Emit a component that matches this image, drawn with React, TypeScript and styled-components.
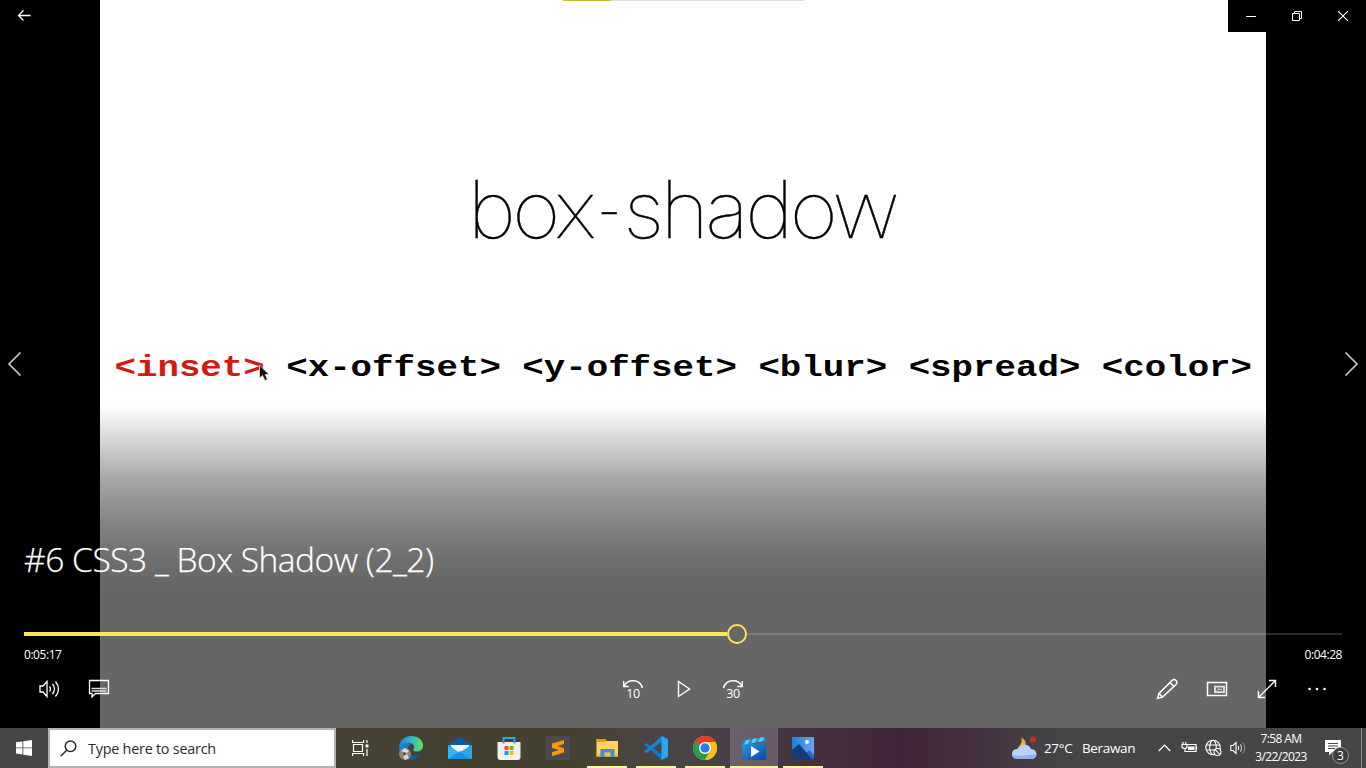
import React from 'react';
import styled, { createGlobalStyle } from 'styled-components';

const Global = createGlobalStyle`
  * { box-sizing: border-box; }
  html, body { margin: 0; background: #000; }
  body { width: 1366px; height: 768px; overflow: hidden; font-family: "Open Sans", "Noto Sans", sans-serif; color: #fff; }
  svg { display: block; flex: none; }
`;

const Screen = styled.div`
  width: 1366px;
  height: 768px;
  display: grid;
  grid-template-rows: 728px 40px;
`;

const Player = styled.main`
  display: grid;
  grid-template: 728px / 1366px;
  overflow: hidden;
  background: #000;
  & > * { grid-area: 1 / 1; }
`;

const Slide = styled.section`
  justify-self: center;
  width: 1166px;
  background: #fff;
  color: #000;
  display: flex;
  flex-direction: column;
  align-items: center;
  padding-top: 162px;
`;

const SlideTitle = styled.h1`
  margin: 0 2px 0 0;
  height: 94px;
  font: 100 79px/94px Inter, sans-serif;
  letter-spacing: -3.5px;
  white-space: nowrap;
  transform: scaleX(1.05);
  -webkit-text-stroke: 0.4px #000;
`;
const Hyphen = styled.span`
  display: inline-block;
  transform: scaleX(0.66);
  margin: 0 -1px 0 -1px;
`;

const Syntax = styled.div`
  margin: 92px 0 0 3px;
  width: 1140px;
  font: bold 35.77px/40px "Liberation Mono", monospace;
  white-space: nowrap;
  transform: scaleY(0.84);
`;

const Inset = styled.span`
  color: #d01c10;
`;

const Scrim = styled.div`
  background: linear-gradient(
    to bottom,
    transparent 406px,
    rgba(0, 0, 0, 0.2) 448px,
    rgba(0, 0, 0, 0.38) 488px,
    rgba(0, 0, 0, 0.5) 530px,
    rgba(0, 0, 0, 0.57) 560px,
    rgba(0, 0, 0, 0.6) 588px
  );
`;

const Chrome = styled.div`
  display: grid;
  grid-template-rows: 32px 1fr auto;
`;

const TitleBar = styled.header`
  display: flex;
`;

const BackButton = styled.button`
  width: 48px;
  height: 30px;
  padding: 0;
  border: 0;
  background: none;
  display: grid;
  place-items: center;
`;

const TopProgress = styled.div`
  width: 241px;
  height: 1px;
  margin: 0 auto 0 515px;
  background: linear-gradient(to right, #c9b93a 48px, #dedede 48px);
`;

const WindowButtons = styled.div`
  display: grid;
  grid-template-columns: repeat(3, 46px);
  width: 138px;
  height: 32px;
  background: #000;
  place-items: center;
`;

const Arrows = styled.div`
  display: flex;
  justify-content: space-between;
  padding: 319px 7px 0;
`;

const Controls = styled.footer`
  height: 196px;
  padding: 0 24px;
`;

const VideoTitle = styled.h2`
  margin: 0;
  height: 56px;
  font: 300 33.5px/55px "Open Sans", sans-serif;
  letter-spacing: -0.46px;
  white-space: nowrap;
  -webkit-text-stroke: 0.25px #fff;
`;

const Seek = styled.div`
  display: flex;
  align-items: center;
  height: 20px;
  margin-top: 36px;
`;
const Played = styled.div`
  width: 703px;
  height: 4px;
  background: #ffe74f;
`;
const Thumb = styled.div`
  width: 20px;
  height: 20px;
  border: 2px solid #ffe74f;
  border-radius: 50%;
`;
const Remaining = styled.div`
  flex: 1;
  height: 2px;
  background: rgba(255, 255, 255, 0.17);
`;

const Times = styled.div`
  display: flex;
  justify-content: space-between;
  height: 20px;
  font-size: 12px;
  line-height: 22px;
  letter-spacing: -0.45px;
`;

const Buttons = styled.div`
  display: grid;
  grid-template-columns: 1fr 150px 1fr;
  height: 50px;
`;
const Group = styled.div<{ $end?: boolean }>`
  display: flex;
  justify-content: ${p => (p.$end ? 'flex-end' : 'flex-start')};
`;
const ControlButton = styled.button`
  width: 50px;
  height: 50px;
  padding: 0;
  border: 0;
  background: none;
  display: grid;
  place-items: center;
`;

const Taskbar = styled.nav`
  display: flex;
  background: linear-gradient(to right, #464646 0, #464646 40px, #454234 340px, #45412f 570px, #4a4541 640px, #49404a 730px, #44303f 810px, #40263b 900px, #44313f 980px, #444045 1030px, #464646 1070px);
`;
const Start = styled.div`
  width: 48px;
  display: grid;
  place-items: center;
`;
const Search = styled.div`
  width: 288px;
  border: 2px solid #b2b2b2;
  background: #fff;
  color: #2b2b2b;
  display: flex;
  align-items: center;
  gap: 11px;
  padding-left: 10px;
  font-size: 14.4px;
  letter-spacing: -0.24px;
  white-space: nowrap;
`;
const Apps = styled.div`
  display: flex;
  gap: 1px;
  margin-left: 2px;
`;
const TaskView = styled.div`
  width: 49px;
  display: grid;
  place-items: center;
`;
const AppItem = styled.div<{ $open?: boolean; $active?: boolean }>`
  width: 48px;
  height: 40px;
  display: flex;
  flex-direction: column;
  align-items: center;
  justify-content: space-between;
  padding-top: 8px;
  background: ${p => (p.$active ? 'rgba(255,255,255,0.18)' : 'transparent')};
  &::after {
    content: '';
    height: 2px;
    width: ${p => (p.$active ? '48px' : '40px')};
    background: ${p => (p.$open ? '#fdf1a4' : 'transparent')};
  }
`;
const Tray = styled.div`
  margin-left: auto;
  display: flex;
  align-items: center;
  width: 354px;
  white-space: nowrap;
`;
const Weather = styled.div`
  display: flex;
  width: 121px;
  font-size: 13.5px;
  letter-spacing: -0.35px;
  align-items: center;
`;
const Temp = styled.span`
  margin-left: 7px;
  width: 38px;
`;
const TrayIcons = styled.div`
  display: flex;
  align-items: center;
  gap: 7px;
  width: 93px;
  & > :first-child { margin-right: 3px; }
`;
const Clock = styled.div`
  width: 60px;
  text-align: center;
  font-size: 12px;
  line-height: 18px;
  letter-spacing: -0.6px;
  padding-bottom: 1px;
`;
const Notice = styled.div`
  position: relative;
  margin-left: 14px;
  width: 30px;
  height: 40px;
  padding-top: 12px;
`;
const Badge = styled.span`
  position: absolute;
  left: 7px;
  top: 19px;
  width: 17px;
  height: 17px;
  border: 1px solid #999;
  border-radius: 50%;
  background: #3c3c3c;
  font-size: 12px;
  line-height: 15px;
  text-align: center;
`;
const DesktopEdge = styled.div`
  margin-left: auto;
  margin-right: 4px;
  width: 1px;
  height: 40px;
  background: #8b8b8b;
`;
const Pointer = styled.div`
  position: relative;
  left: 259px;
  top: 364px;
  width: 12px;
  height: 20px;
`;

const line = { fill: 'none', stroke: '#fff', strokeWidth: 1.2 };

const Back = () => (
  <svg width="14" height="14" {...line} strokeWidth={1.3}><path d="M13.500 7.500H1.500M6.500 2.500l-5 5 5 5" /></svg>
);
const Chevron = ({ right }: { right?: boolean }) => (
  <svg width="16" height="26" fill="none" stroke="#c8c8c8" strokeWidth="1.7">
    <path d={right ? 'M2.500 1.500l11.500 11.500-11.500 11.500' : 'M13.500 1.500L2 13l11.500 11.500'} />
  </svg>
);
const Volume = () => (
  <svg width="24" height="22" {...line} strokeWidth={1.3}>
    <path d="M3 8h3l4-4.500v15L6 14H3zM12.500 8.500q2 2.500 0 5M15.500 6q4 5 0 10M18.500 3.500q6 7.500 0 15" />
  </svg>
);
const Subtitles = () => (
  <svg width="22" height="22" {...line} strokeWidth={1.3}>
    <path d="M1.500 2.500h19v13H7.500l-3.500 3.500v-3.500H1.500z" /><path d="M3.500 10.500h15M3.500 13h15" stroke="#ddd" />
  </svg>
);
const numberStyle = { fill: '#fff', stroke: 'none', fontFamily: 'Open Sans', fontSize: 12.5, letterSpacing: -0.5 };
const Skip = ({ n }: { n: number }) => (
  <svg width="24" height="24" {...line} strokeWidth={1.4}>
    <path d={n === 10 ? 'M21.500 11C19 2 7 1.500 3 9M2.700 4v5.500h5' : 'M2.500 11C5 2 17 1.500 21 9M21.300 4v5.500h-5'} />
    <text x="12" y="20.500" textAnchor="middle" {...numberStyle}>{n}</text>
  </svg>
);
const Play = () => (
  <svg width="20" height="22" {...line} strokeWidth={1.4}><path d="M5.500 3.500v15L16.500 11z" /></svg>
);
const Pencil = () => (
  <svg width="24" height="24" {...line} strokeWidth={1.5}>
    <path d="M2.500 21.500l1.500-5L17 3.500q2-2 4 0t0 4L7.500 20zM15 5.500l4 4M4 16.500l3.500 3.500" />
  </svg>
);
const MiniView = () => (
  <svg width="22" height="22" {...line} strokeWidth={1.5}>
    <path d="M1.500 4.500h19v13h-19z" /><path d="M9 8.700h9v5.500H9z" strokeWidth="1.8" stroke="#e4e4e4" /><path d="M11 12.500l2-2 1.500 1.500 1.500-1" strokeWidth="1" />
  </svg>
);
const Expand = () => (
  <svg width="22" height="22" {...line} strokeWidth={1.4}><path d="M2.500 19.500l17-17M13 2.500h6.500V9M2.500 13v6.500H9" /></svg>
);
const More = () => (
  <svg width="20" height="20" fill="#fff"><circle cx="2.500" cy="10" r="1.300" /><circle cx="10" cy="10" r="1.300" /><circle cx="17.500" cy="10" r="1.300" /></svg>
);
const Windows = () => (
  <svg width="16" height="16" fill="#fff"><path d="M0 2.300l6.500-.9v6.100H0zM7.300 1.300L16 0v7.500H7.300zM0 8.300h6.500v6.200L0 13.600zM7.300 8.300H16V16l-8.700-1.300z" /></svg>
);
const Magnifier = () => (
  <svg width="17" height="17" fill="none" stroke="#222" strokeWidth="1.400"><circle cx="10.500" cy="6.300" r="5.300" /><path d="M6.700 10.200L.6 16.300" /></svg>
);
const TaskViewIcon = () => (
  <svg width="18" height="16" {...line}><path d="M1.500 4.500h9v7h-9zM.6 0v2.500h11V0M.6 16v-2.500h11V16M15 0v3M15 9v7" /><path d="M13.500 4.500h3v3h-3z" fill="#fff" stroke="none" /></svg>
);

const Edge = () => (
  <svg width="24" height="24">
    <defs>
      <linearGradient id="edgeTop"><stop stopColor="#1583cf" /><stop offset=".5" stopColor="#28b8c8" /><stop offset="1" stopColor="#6fe051" /></linearGradient>
      <linearGradient id="edgeLow" x2="1" y2="1"><stop stopColor="#1690dc" /><stop offset="1" stopColor="#0c4f9c" /></linearGradient>
    </defs>
    <path d="M0 12C0 5 5 0 12 0s12 4 12 9.500c0 4-3 6-6.500 6-3 0-4-1-3-2.500 2-3-1-6-5-6-5 0-8.500 3-9.500 6z" fill="url(#edgeTop)" />
    <path d="M0 13c1-6 9-8 12-4-5 0-5 10 3 11 3 .3 5-.5 7-2-2 4-6 6-10 6C5 24 0 19 0 13z" fill="url(#edgeLow)" />
    <circle cx="6" cy="18" r="6" fill="#8d8580" /><path d="M2 15l4-3 4 3-2 2-3-1zM4 20l4-2 2 4-4 2z" fill="#e0d6ce" /><path d="M5 16l2 2-3 2z" fill="#4a3b35" />
  </svg>
);
const Mail = () => (
  <svg width="24" height="24"><path d="M0 9L12 0.800 24 9v4H0z" fill="#0c59a4" /><path d="M2 9h20l-7 8H8z" fill="#f4f4f4" /><path d="M0 9l12 8 12-8v14H0z" fill="#32b4f0" /><path d="M0 23l12-8L24 23z" fill="#1d93e0" /><path d="M12 16l12-7v14z" fill="#2aa4ea" /></svg>
);
const Store = () => (
  <svg width="24" height="24"><path d="M6.500 8V2h11v6" fill="none" stroke="#22a6e8" strokeWidth="2" /><path d="M.5 6h23v15q0 3-3 3h-17q-3 0-3-3z" fill="#efefef" /><path d="M6.500 6v1.500M17.500 6v1.500" stroke="#22a6e8" strokeWidth="2" /><path d="M7.500 10h4v4h-4z" fill="#f25022" /><path d="M12.500 10h4v4h-4z" fill="#7fba00" /><path d="M7.500 15h4v4h-4z" fill="#00a4ef" /><path d="M12.500 15h4v4h-4z" fill="#ffb900" /></svg>
);
const Sublime = () => (
  <svg width="24" height="24"><path d="M0 0h24v24H0z" fill="#4b4b4d" /><path d="M6 7.500L18 4v4l-7 2.200 7 1.800v4.500L6 20.300v-4l7-2.200L6 12z" fill="#ff9800" /></svg>
);
const Explorer = () => (
  <svg width="24" height="24"><path d="M1.500 3H10l1.500 2h11.500v15.500H1.500z" fill="#ffd35c" /><path d="M1.500 3h8.500l1 3H1.500z" fill="#e5a000" /><path d="M1.500 17h21.500v3.500H1.500z" fill="#f7c13e" /><path d="M5.500 21v-8h14v8h-4v-4.500h-6V21z" fill="#3d8fd8" /></svg>
);
const VSCode = () => (
  <svg width="24" height="24"><path d="M0 8.500L2.500 7 18 18.500V24z" fill="#0a7bca" /><path d="M0 15.500L2.500 17 18 5.500V0z" fill="#1287d4" /><path d="M17.500 0L24 3v18l-6.500 3z" fill="#2ba5f2" /></svg>
);
const ChromeIcon = () => (
  <svg width="24" height="24"><circle cx="12" cy="12" r="12" fill="#fbc116" /><path d="M12 12L1.600 6A12 12 0 0 1 22.400 6z" fill="#e33b2e" /><path d="M12 12L1.600 6A12 12 0 0 0 12 24l5.200-9z" fill="#229f4e" /><path d="M12 6h10.400A12 12 0 0 1 12 24l5.200-9z" fill="#fbc116" /><circle cx="12" cy="12" r="6" fill="#fff" /><circle cx="12" cy="12" r="4.700" fill="#2b7de9" /></svg>
);
const Films = () => (
  <svg width="24" height="24"><defs><linearGradient id="film" x2="1" y2="1"><stop stopColor="#2c97dd" /><stop offset="1" stopColor="#0649ad" /></linearGradient></defs><path d="M0 8h24v14q0 2-2 2H2q-2 0-2-2z" fill="url(#film)" /><path d="M0 5L23 0.800l1 4L0 9z" fill="#1690dc" /><path d="M4 4.300l4-.7-2 4.200-4 .7zM11 3l4-.7-2 4.200-4 .7zM18 1.800l4-.7-1 4-5 .8z" fill="#5bd0fa" /><path d="M9 10v11l8.500-5.500z" fill="#fff" /></svg>
);
const Photos = () => (
  <svg width="24" height="24"><defs><linearGradient id="sky" x2="1"><stop stopColor="#1a82dd" /><stop offset="1" stopColor="#6aa4f0" /></linearGradient></defs><path d="M1 1h22v22H1z" fill="url(#sky)" /><path d="M10 23l8-9 5 5v4z" fill="#2c66bd" /><path d="M1 14l7-6 13 15H1z" fill="#123c7e" /><circle cx="16" cy="6" r="2" fill="#fff" /></svg>
);
const WeatherIcon = () => (
  <svg width="25" height="24"><path d="M9.500 1c3 3 5 4 4 8l-4 6H1c4-1 10-7 8.500-14z" fill="#f8a51f" /><path d="M6 23q-6 0-6-5t6-5q3-6 9-4 3 1 4 4 5 .5 5.500 5 0 5-6 5z" fill="#b8d2fa" /><path d="M6 23q-5 0-6-4 7 2 24.500-1-.5 5-6 5z" fill="#8fb4ec" /><circle cx="21" cy="3.500" r="3" fill="#cf2b1e" /></svg>
);
const Caret = () => (
  <svg width="13" height="8" {...line}><path d="M.8 7l5.700-5.800L12.200 7" /></svg>
);
const Battery = () => (
  <svg width="17" height="14" {...line}><path d="M5.500 3.500H15v7H4V7M15.500 5.500v3M1 3.500h5v2q0 2-2.500 2T1 5.500zM2 1v2.500M4.800 1v2.500" /><path d="M7 5.500h6.500v3.500H7z" fill="#fff" stroke="none" /></svg>
);
const Globe = () => (
  <svg width="18" height="18" {...line} strokeWidth={1.1}><circle cx="8" cy="8.500" r="7.200" /><ellipse cx="8" cy="8.500" rx="3.300" ry="7.200" /><path d="M1 6h14M1 11h14" /><circle cx="12.500" cy="13" r="3.500" fill="#464646" /><path d="M10.100 10.600l4.800 4.800" /></svg>
);
const Speaker = () => (
  <svg width="17" height="16" {...line} strokeWidth={1.1}><path d="M.8 5.500H3l3-3v11l-3-3H.8zM8 6q1.400 2 0 4" /><path d="M10.300 4.300q2.500 3.700 0 7.400" stroke="#ccc" /><path d="M12.800 2.500q4 5.500 0 11" stroke="#888" /></svg>
);
const Message = () => (
  <svg width="17" height="17"><path d="M0 0h16v12H7.500L4 15.500V12H0z" fill="#fff" /><path d="M3 3.500h10M3 6h10M3 8.500h7" stroke="#464646" /></svg>
);

const apps = [
  { name: 'Edge', icon: <Edge /> },
  { name: 'Mail', icon: <Mail /> },
  { name: 'Store', icon: <Store /> },
  { name: 'Sublime', icon: <Sublime /> },
  { name: 'Explorer', icon: <Explorer />, open: true },
  { name: 'VSCode', icon: <VSCode />, open: true },
  { name: 'Chrome', icon: <ChromeIcon />, open: true },
  { name: 'Films', icon: <Films />, open: true, active: true },
  { name: 'Photos', icon: <Photos />, open: true },
];

export default function App() {
  return (
    <>
      <Global />
      <Screen>
        <Player>
          <Slide>
            <SlideTitle>box<Hyphen>-</Hyphen>shadow</SlideTitle>
            <Syntax><Inset>&lt;inset&gt;</Inset> &lt;x-offset&gt; &lt;y-offset&gt; &lt;blur&gt; &lt;spread&gt; &lt;color&gt;</Syntax>
          </Slide>
          <Pointer>
            <svg width="12" height="20"><path d="M.5 1v13l3-2.500 2.500 5 2.500-1-2.300-5H10z" fill="#111" stroke="#ddd" strokeWidth=".8" /></svg>
          </Pointer>
          <Scrim />
          <Chrome>
            <TitleBar>
              <BackButton><Back /></BackButton>
              <TopProgress />
              <WindowButtons>
                <svg width="10" height="10" {...line} strokeWidth={1}><path d="M0 5.500h10" /></svg>
                <svg width="10" height="10" {...line} strokeWidth={1}><path d="M.5 2.500h7v7h-7zM2.500 2.500v-2h7v7h-2" /></svg>
                <svg width="10" height="10" {...line} strokeWidth={1.1}><path d="M0 0l10 10M10 0L0 10" /></svg>
              </WindowButtons>
            </TitleBar>
            <Arrows><Chevron /><Chevron right /></Arrows>
            <Controls>
              <VideoTitle>#6 CSS3 _ Box Shadow (2_2)</VideoTitle>
              <Seek><Played /><Thumb /><Remaining /></Seek>
              <Times><span>0:05:17</span><span>0:04:28</span></Times>
              <Buttons>
                <Group>
                  <ControlButton><Volume /></ControlButton>
                  <ControlButton><Subtitles /></ControlButton>
                </Group>
                <Group>
                  <ControlButton><Skip n={10} /></ControlButton>
                  <ControlButton><Play /></ControlButton>
                  <ControlButton><Skip n={30} /></ControlButton>
                </Group>
                <Group $end>
                  <ControlButton><Pencil /></ControlButton>
                  <ControlButton><MiniView /></ControlButton>
                  <ControlButton><Expand /></ControlButton>
                  <ControlButton><More /></ControlButton>
                </Group>
              </Buttons>
            </Controls>
          </Chrome>
        </Player>
        <Taskbar>
          <Start><Windows /></Start>
          <Search><Magnifier />Type here to search</Search>
          <TaskView><TaskViewIcon /></TaskView>
          <Apps>
            {apps.map(a => <AppItem key={a.name} $open={a.open} $active={a.active}>{a.icon}</AppItem>)}
          </Apps>
          <Tray>
            <WeatherIcon />
            <Weather><Temp>27°C</Temp>Berawan</Weather>
            <TrayIcons><Caret /><Battery /><Globe /><Speaker /></TrayIcons>
            <Clock>7:58 AM<br />3/22/2023</Clock>
            <Notice><Message /><Badge>3</Badge></Notice>
            <DesktopEdge />
          </Tray>
        </Taskbar>
      </Screen>
    </>
  );
}
